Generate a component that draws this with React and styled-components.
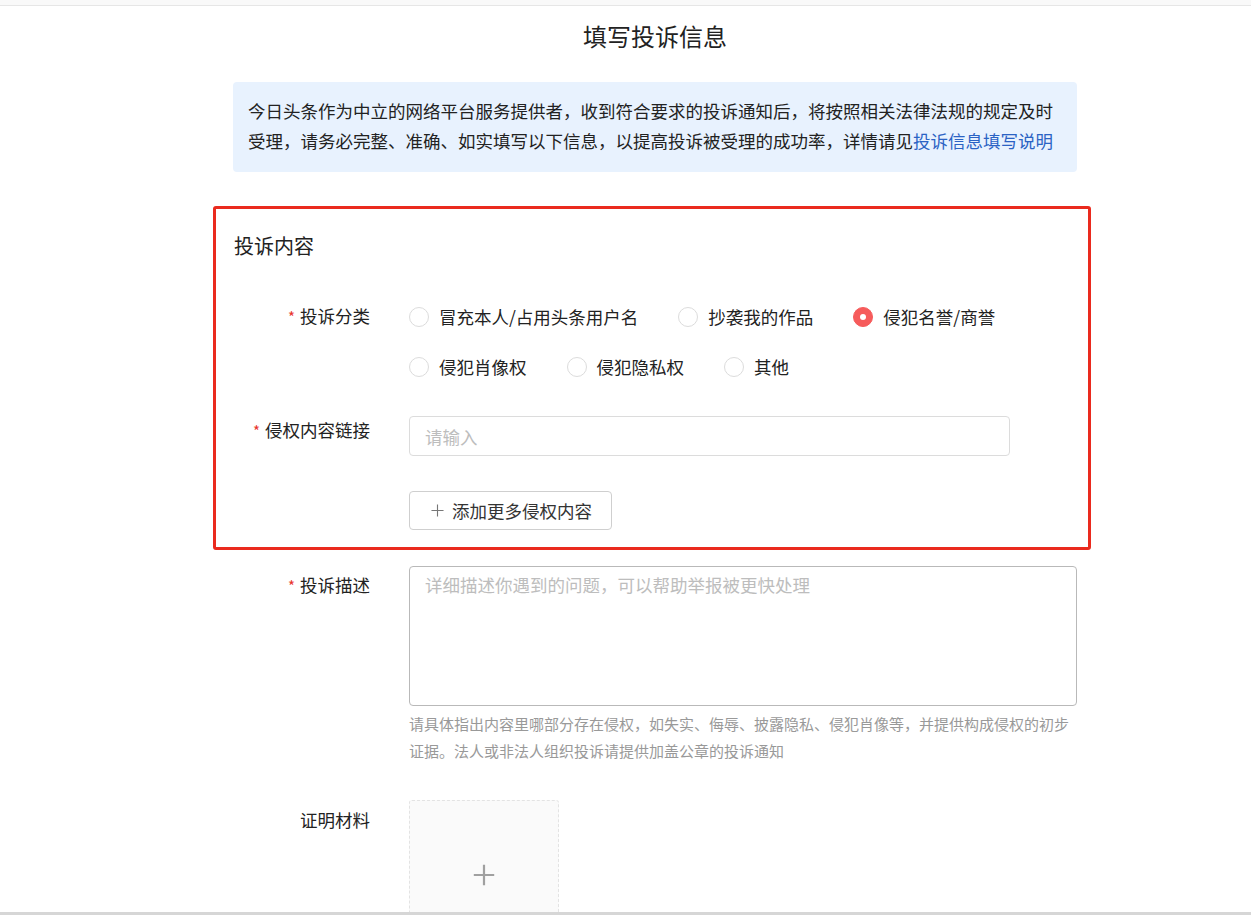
import React from "react"
import styled, { createGlobalStyle } from "styled-components"

const GlobalStyle = createGlobalStyle`
  html, body {
    margin: 0;
    padding: 0;
    background: #fff;
  }
  body {
    font-family: "Noto Sans CJK SC", "Noto Sans", sans-serif;
    color: #222;
  }
`

const categories = [
  ["冒充本人/占用头条用户名", "抄袭我的作品", "侵犯名誉/商誉"],
  ["侵犯肖像权", "侵犯隐私权", "其他"],
]

const PlusIcon = ({ size = 14, color = "#777", width = 1.2 }) => (
  <svg width={size} height={size} viewBox="0 0 14 14">
    <path d="M7 0.5V13.5M0.5 7H13.5" stroke={color} strokeWidth={width} fill="none" />
  </svg>
)

const ComplaintForm = () => {
  const selected = "侵犯名誉/商誉"
  return (
    <Frame>
      <GlobalStyle />
      <TopStrip />
      <Main>
        <Title>填写投诉信息</Title>
        <Notice>
          今日头条作为中立的网络平台服务提供者，收到符合要求的投诉通知后，将按照相关法律法规的规定及时受理，请务必完整、准确、如实填写以下信息，以提高投诉被受理的成功率，详情请见
          <NoticeLink>投诉信息填写说明</NoticeLink>
        </Notice>

        <Section>
          <SectionTitle>投诉内容</SectionTitle>

          <Row>
            <Label $pt={1}>
              <Star>*</Star>投诉分类
            </Label>
            <RadioGroup>
              {categories.map((line, i) => (
                <RadioLine key={i}>
                  {line.map((name) => (
                    <RadioOption key={name}>
                      <RadioDot $checked={name === selected} />
                      {name}
                    </RadioOption>
                  ))}
                </RadioLine>
              ))}
            </RadioGroup>
          </Row>

          <Row $mt={34}>
            <Label $pt={1}>
              <Star>*</Star>侵权内容链接
            </Label>
            <TextInput placeholder="请输入" />
          </Row>

          <Row $mt={35}>
            <span />
            <div>
              <AddButton>
                <PlusIcon size={13} color="#777" />
                添加更多侵权内容
              </AddButton>
            </div>
          </Row>
        </Section>

        <Row $mt={16}>
          <Label $pt={6}>
            <Star>*</Star>投诉描述
          </Label>
          <div>
            <TextArea placeholder="详细描述你遇到的问题，可以帮助举报被更快处理" />
            <Hint>
              请具体指出内容里哪部分存在侵权，如失实、侮辱、披露隐私、侵犯肖像等，并提供构成侵权的初步证据。法人或非法人组织投诉请提供加盖公章的投诉通知
            </Hint>
          </div>
        </Row>

        <Row $mt={36}>
          <Label $pt={7}>证明材料</Label>
          <Upload>
            <PlusIcon size={22} color="#a0a0a0" width={1.4} />
          </Upload>
        </Row>
      </Main>
    </Frame>
  )
}

const Frame = styled.div`
  height: 100vh;
  box-sizing: border-box;
  overflow: hidden;
  border-bottom: 3px solid #d6d6d6;
`
const TopStrip = styled.div`
  height: 5px;
  background: #f9f9f9;
  border-bottom: 1px solid #e6e6e6;
`
const Main = styled.div`
  width: 844px;
  margin-left: 233px;
`
const Title = styled.h1`
  margin: 0;
  padding-top: 13px;
  font-size: 24px;
  line-height: 34px;
  font-weight: 400;
  text-align: center;
  color: #222;
`
const Notice = styled.div`
  margin-top: 29px;
  padding: 14px 15px 16px;
  background: #e8f2fe;
  border-radius: 4px;
  font-size: 17.5px;
  line-height: 30px;
  color: #222;
`
const NoticeLink = styled.a`
  color: #2b63c4;
  cursor: pointer;
`
const Section = styled.div`
  margin: 34px -14px 0 -20px;
  padding: 24px 14px 17px 17px;
  border: 3px solid #ea2a1e;
  border-radius: 3px;
`
const SectionTitle = styled.div`
  padding-left: 1px;
  font-size: 20px;
  line-height: 26px;
  color: #222;
  margin-bottom: 43px;
`
const Row = styled.div`
  display: grid;
  grid-template-columns: 137px 1fr;
  column-gap: 39px;
  margin-top: ${(p) => p.$mt || 0}px;
`
const Label = styled.div`
  padding-top: ${(p) => p.$pt || 0}px;
  text-align: right;
  font-size: 17.5px;
  line-height: 26px;
  color: #222;
  white-space: nowrap;
`
const Star = styled.span`
  color: #e8342c;
  font-size: 15px;
  margin-right: 5px;
`
const RadioGroup = styled.div`
  display: flex;
  flex-direction: column;
  gap: 20px;
`
const RadioLine = styled.div`
  display: flex;
  align-items: center;
`
const RadioOption = styled.label`
  display: flex;
  align-items: center;
  gap: 10px;
  margin-right: 40px;
  font-size: 17.5px;
  line-height: 30px;
  color: #222;
  cursor: pointer;
`
const RadioDot = styled.span`
  position: relative;
  width: 20px;
  height: 20px;
  box-sizing: border-box;
  border-radius: 50%;
  border: 1px solid ${(p) => (p.$checked ? "#f65b5b" : "#dcdcdc")};
  background: ${(p) => (p.$checked ? "#f65b5b" : "#fff")};
  &::after {
    content: "";
    display: ${(p) => (p.$checked ? "block" : "none")};
    position: absolute;
    left: 50%;
    top: 50%;
    width: 6px;
    height: 6px;
    margin: -3px 0 0 -3px;
    border-radius: 50%;
    background: #fff;
  }
`
const TextInput = styled.input`
  width: 601px;
  height: 40px;
  box-sizing: border-box;
  padding: 0 15px;
  border: 1px solid #dcdcdc;
  border-radius: 4px;
  font-family: inherit;
  font-size: 17.5px;
  color: #222;
  outline: none;
  &::placeholder {
    color: #bdbdbd;
  }
`
const AddButton = styled.button`
  display: inline-flex;
  align-items: center;
  gap: 8px;
  height: 39px;
  box-sizing: border-box;
  padding: 0 19px 0 21px;
  background: #fff;
  border: 1px solid #cfcfcf;
  border-radius: 4px;
  font-family: inherit;
  font-size: 17.5px;
  color: #333;
  cursor: pointer;
`
const TextArea = styled.textarea`
  display: block;
  width: 668px;
  height: 140px;
  box-sizing: border-box;
  padding: 6px 15px;
  border: 1px solid #b9b9b9;
  border-radius: 4px;
  resize: none;
  font-family: inherit;
  font-size: 17.5px;
  line-height: 24px;
  color: #222;
  outline: none;
  &::placeholder {
    color: #bdbdbd;
  }
`
const Hint = styled.div`
  width: 668px;
  margin-top: 4px;
  font-size: 15px;
  line-height: 27px;
  color: #999;
`
const Upload = styled.div`
  width: 150px;
  height: 150px;
  box-sizing: border-box;
  display: flex;
  align-items: center;
  justify-content: center;
  background: #fafafa;
  border: 1px dashed #e3e3e3;
  border-radius: 3px;
`

export default ComplaintForm
